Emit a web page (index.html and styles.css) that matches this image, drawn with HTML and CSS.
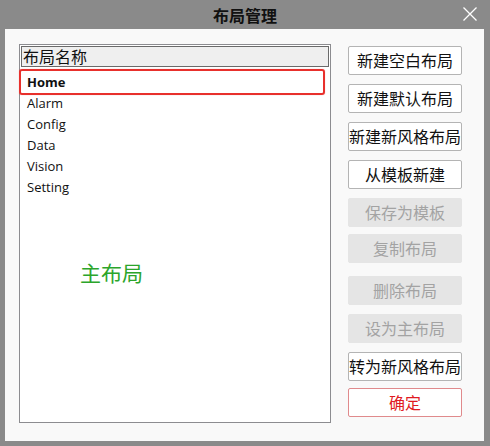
FILE: index.html
```html
<!DOCTYPE html>
<html lang="zh">
<head>
<meta charset="utf-8">
<title>布局管理</title>
<link rel="stylesheet" href="styles.css">
</head>
<body>
<div class="window">
  <div class="titlebar">
    <span></span>
    <span class="title">布局管理</span>
    <span class="close">
      <svg width="14" height="14" viewBox="0 0 14 14"><path d="M0.5 0.5 L13.5 13.5 M13.5 0.5 L0.5 13.5" stroke="#ffffff" stroke-width="1.3" fill="none"/></svg>
    </span>
  </div>
  <div class="content">
    <div class="list">
      <div class="list-header">布局名称</div>
      <div class="row selected">Home</div>
      <div class="row">Alarm</div>
      <div class="row">Config</div>
      <div class="row">Data</div>
      <div class="row">Vision</div>
      <div class="row">Setting</div>
      <div class="main-label">主布局</div>
    </div>
    <div class="buttons">
      <button class="btn">新建空白布局</button>
      <button class="btn">新建默认布局</button>
      <button class="btn">新建新风格布局</button>
      <button class="btn">从模板新建</button>
      <button class="btn disabled">保存为模板</button>
      <button class="btn disabled tight">复制布局</button>
      <button class="btn disabled wide">删除布局</button>
      <button class="btn disabled">设为主布局</button>
      <button class="btn">转为新风格布局</button>
      <button class="btn ok tight">确定</button>
    </div>
  </div>
</div>
</body>
</html>
```
FILE: styles.css
```css
html, body {
  margin: 0;
  padding: 0;
  background: #8a8a8a;
}
body {
  width: 490px;
  height: 446px;
  overflow: hidden;
  font-family: "Noto Sans CJK SC", "Noto Sans", sans-serif;
}
.window {
  display: flex;
  flex-direction: column;
  width: 490px;
  height: 446px;
}
.titlebar {
  height: 29px;
  display: grid;
  grid-template-columns: 1fr auto 1fr;
  align-items: center;
}
.title {
  font-size: 16px;
  font-weight: bold;
  color: #111;
  line-height: 20px;
}
.close {
  justify-self: end;
  margin-right: 13px;
  display: flex;
  margin-top: -2px;
}
.content {
  flex: 1;
  margin: 0 6px 5px 5px;
  background: #f9f9f9;
  display: flex;
  align-items: flex-start;
}
.list {
  margin: 15px 0 0 14px;
  width: 310px;
  height: 377px;
  border: 1px solid #8c8c90;
  background: #ffffff;
  font-family: "Open Sans", "Noto Sans", sans-serif;
  font-size: 13px;
  color: #111;
}
.list-header {
  margin: 1px 1px 0 1px;
  height: 19px;
  border: 1px solid #6a6a6a;
  background: #efefef;
  font-family: "Noto Sans CJK SC", sans-serif;
  font-size: 16px;
  line-height: 19px;
  padding-left: 1px;
  color: #111;
}
.row {
  height: 21px;
  line-height: 21px;
  padding-left: 7px;
}
.row.selected {
  margin: 2px 0 -2px -1px;
  width: 296px;
  height: 22px;
  line-height: 22px;
  border: 2px solid #e8302c;
  border-radius: 3px;
  padding-left: 6px;
  font-weight: bold;
  box-shadow: 0 0 1px rgba(232, 48, 44, 0.5);
}
.main-label {
  margin-top: 62px;
  padding-left: 60px;
  font-family: "Noto Sans CJK SC", sans-serif;
  font-size: 21px;
  line-height: 25px;
  color: #2ba52b;
}
.buttons {
  margin: 17px 0 0 17px;
  width: 114px;
  display: flex;
  flex-direction: column;
  gap: 9px;
}
.btn {
  width: 114px;
  height: 29px;
  padding: 0;
  margin: 0;
  background: #ffffff;
  border: 1px solid #b4b4b4;
  border-radius: 2px;
  font-family: "Noto Sans CJK SC", sans-serif;
  font-size: 16px;
  line-height: 27px;
  color: #111;
  white-space: nowrap;
  overflow: visible;
  display: flex;
  justify-content: center;
  align-items: center;
}
.btn.disabled {
  background: #e5e5e5;
  border-color: #e5e5e5;
  color: #a3a3a3;
}
.btn.tight {
  margin-top: -2px;
}
.btn.wide {
  margin-top: 4px;
}
.btn.ok {
  border-color: #e08a8c;
  color: #e01a22;
}
```
